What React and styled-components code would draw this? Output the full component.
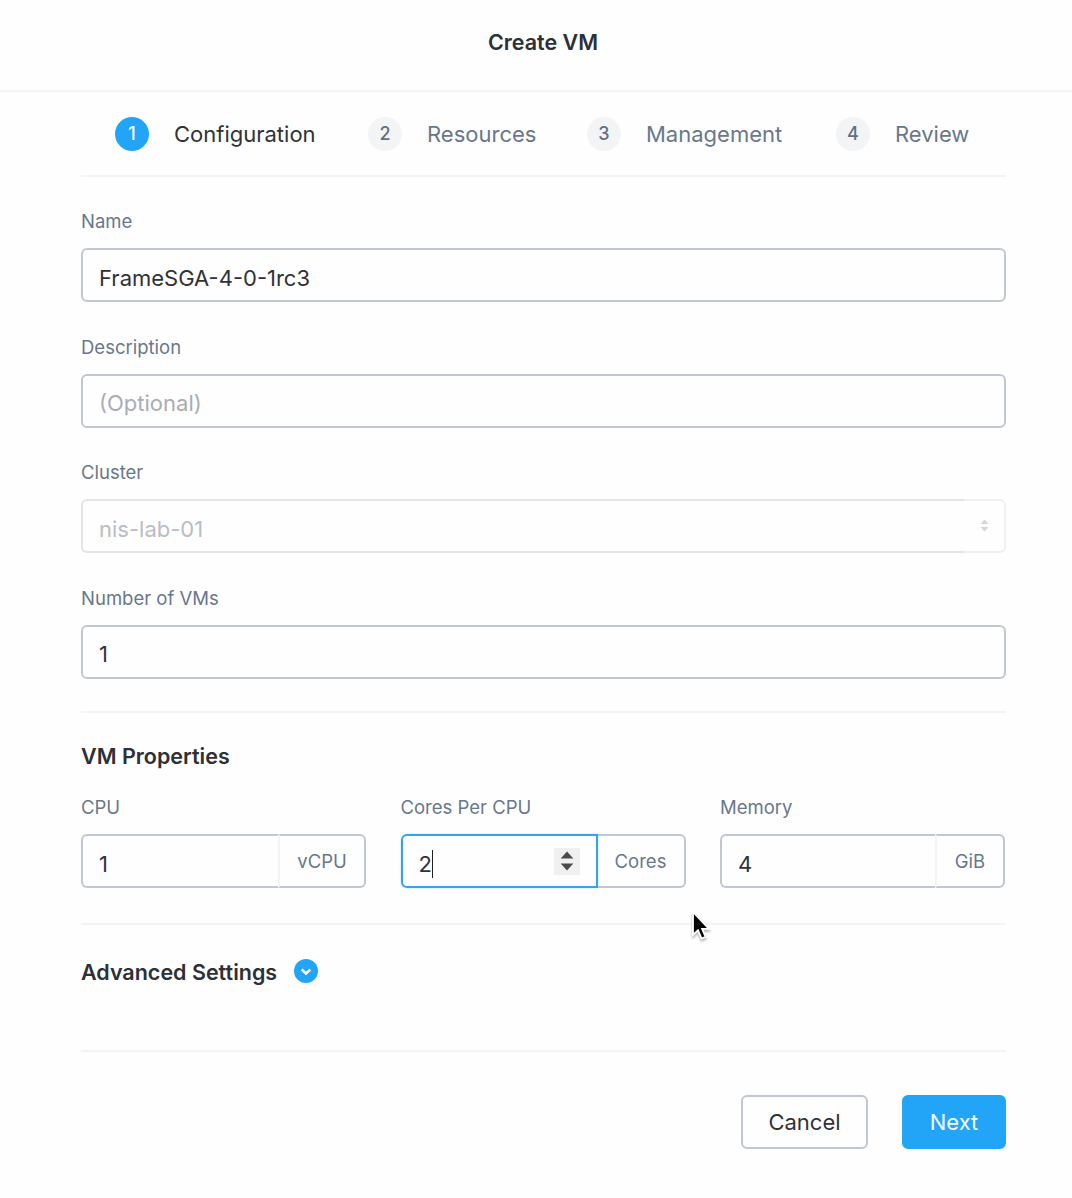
import React from 'react';
import styled, { createGlobalStyle } from 'styled-components';

const GlobalStyle = createGlobalStyle`
  * {
    box-sizing: border-box;
  }
  body {
    margin: 0;
    background: #fefefe;
    font-family: Inter, 'Open Sans', 'Liberation Sans', sans-serif;
    color: #2d3036;
  }
`;

const Modal = styled.div`
  position: relative;
  width: 1072px;
  height: 1198px;
  background: #fefefe;
  overflow: hidden;
  white-space: nowrap;
`;

const Header = styled.header`
  display: flex;
  justify-content: center;
  height: 92px;
  padding: 28px 0 0 14px;
  border-bottom: 2px solid #f4f4f6;
`;

const Heading = styled.h2`
  margin: 0;
  font-size: 21.5px;
  font-weight: 600;
  line-height: 28px;
  letter-spacing: ${(props) => props.$track || 0}px;
`;

const Content = styled.main`
  width: 925px;
  margin-left: 81px;
`;

const Steps = styled.nav`
  display: flex;
  align-items: center;
  height: 85px;
  padding-left: 34px;
  border-bottom: 2px solid #f4f4f6;
`;

const Step = styled.div`
  display: flex;
  align-items: center;
  gap: 25px;
  width: ${(props) => props.$width}px;
`;

const StepNumber = styled.span`
  display: flex;
  align-items: center;
  justify-content: center;
  flex: none;
  width: 34px;
  height: 34px;
  border-radius: 50%;
  background: ${(props) => (props.$active ? '#22a5f7' : '#f2f4f6')};
  color: ${(props) => (props.$active ? '#fff' : '#627084')};
  font-size: 18px;
  font-weight: 500;
`;

const StepLabel = styled.span`
  font-size: 22px;
  color: ${(props) => (props.$active ? '#303238' : '#68778d')};
  letter-spacing: ${(props) => props.$track || 0}px;
`;

const Field = styled.div`
  height: 125.5px;
`;

const Label = styled.div`
  height: 40px;
  font-size: 18.5px;
  line-height: 26px;
  color: #68778d;
  letter-spacing: ${(props) => props.$track || 0}px;
`;

const Form = styled.section`
  height: 536px;
  padding-top: 31px;
  border-bottom: 2px solid #f4f4f6;
`;

const Control = styled.div`
  display: flex;
  align-items: center;
  height: 54px;
  padding: 5px 16px 0;
  border: 2px solid #c1c7d1;
  border-radius: 6px;
  font-size: 22px;
  color: #303238;
  letter-spacing: ${(props) => props.$track || 0}px;
`;

const Placeholder = styled(Control)`
  color: #a9adb4;
`;

const Select = styled.div`
  display: flex;
  height: 54px;
`;

const SelectValue = styled(Control)`
  flex: 1;
  border-color: #e1e4e9;
  border-right: 0;
  border-radius: 6px 0 0 6px;
  color: #b9bdc4;
`;

const SelectToggle = styled.div`
  display: flex;
  justify-content: center;
  width: 42px;
  padding-top: 17px;
  border: 2px solid #eff0f2;
  border-left: 0;
  border-radius: 0 6px 6px 0;
`;

const Properties = styled.section`
  height: 212px;
  padding-top: 29px;
  border-bottom: 2px solid #f4f4f6;
`;

const Columns = styled.div`
  display: grid;
  grid-template-columns: repeat(3, 285px);
  gap: 34.5px;
  margin-top: 24px;
`;

const InputGroup = styled.div`
  display: flex;
  height: 54px;
`;

const NumberInput = styled(Control)`
  flex: 1;
  border-right: 0;
  border-radius: 6px 0 0 6px;
  ${(props) =>
    props.$focused &&
    `
    border: 2px solid #35a3ec;
    box-shadow: 0 0 2px #8edcff;
  `}
`;

const Unit = styled.div`
  display: flex;
  align-items: center;
  justify-content: center;
  width: ${(props) => props.$width}px;
  border: 2px solid #c1c7d1;
  border-left: ${(props) => (props.$focused ? '0' : '2px solid #f2f3f5')};
  border-radius: 0 6px 6px 0;
  font-size: 18.5px;
  color: #68778d;
  letter-spacing: ${(props) => props.$track || 0}px;
`;

const Caret = styled.span`
  width: 1.5px;
  height: 28px;
  background: #222;
`;

const Stepper = styled.span`
  display: flex;
  align-items: center;
  justify-content: center;
  width: 26px;
  height: 27px;
  margin: -5px 0 0 auto;
  background: #f0f0f0;
`;

const Advanced = styled.section`
  display: flex;
  align-items: flex-start;
  gap: 17px;
  height: 127px;
  padding-top: 33px;
  border-bottom: 2px solid #f1f3f5;

  svg {
    margin-top: 1px;
  }
`;

const Footer = styled.footer`
  display: flex;
  justify-content: flex-end;
  gap: 34px;
  padding-top: 43px;
`;

const Button = styled.button`
  width: ${(props) => props.$width}px;
  height: 54px;
  padding: 0;
  border: 2px solid ${(props) => (props.$primary ? '#22a5f7' : '#c1c7d1')};
  border-radius: 6px;
  background: ${(props) => (props.$primary ? '#22a5f7' : '#fefefe')};
  color: ${(props) => (props.$primary ? '#f4fbff' : '#303238')};
  font-family: inherit;
  font-size: 22px;
  letter-spacing: ${(props) => props.$track || 0}px;
`;

const Pointer = styled.svg`
  position: absolute;
  left: 688px;
  top: 908px;
  filter: drop-shadow(0 2px 1px rgba(0, 0, 0, 0.3));
`;

const steps = [
  { label: 'Configuration', width: 253, track: 0, active: true },
  { label: 'Resources', width: 219, track: 0 },
  { label: 'Management', width: 249, track: 0 },
  { label: 'Review', width: 136, track: 0 },
];

function SortArrows({ width, height, color }) {
  return (
    <svg width={width} height={height} viewBox="0 0 14 20" fill={color}>
      <path d="M7 0.5L13.3 7.5H0.7z" />
      <path d="M7 19.5L13.3 12.5H0.7z" />
    </svg>
  );
}

function App() {
  return (
    <Modal>
      <GlobalStyle />
      <Header>
        <Heading>Create VM</Heading>
      </Header>
      <Content>
        <Steps>
          {steps.map((step, i) => (
            <Step key={step.label} $width={step.width}>
              <StepNumber $active={step.active}>{i + 1}</StepNumber>
              <StepLabel $active={step.active} $track={step.track}>
                {step.label}
              </StepLabel>
            </Step>
          ))}
        </Steps>

        <Form>
          <Field>
            <Label>Name</Label>
            <Control>FrameSGA-4-0-1rc3</Control>
          </Field>
          <Field>
            <Label>Description</Label>
            <Placeholder>(Optional)</Placeholder>
          </Field>
          <Field>
            <Label>Cluster</Label>
            <Select>
              <SelectValue>nis-lab-01</SelectValue>
              <SelectToggle>
                <SortArrows width={9} height={15} color="#d5d6d8" />
              </SelectToggle>
            </Select>
          </Field>
          <Field>
            <Label>Number of VMs</Label>
            <Control>1</Control>
          </Field>
        </Form>

        <Properties>
          <Heading>VM Properties</Heading>
          <Columns>
            <div>
              <Label>CPU</Label>
              <InputGroup>
                <NumberInput>1</NumberInput>
                <Unit $width={88}>vCPU</Unit>
              </InputGroup>
            </div>
            <div>
              <Label>Cores Per CPU</Label>
              <InputGroup>
                <NumberInput $focused>
                  2<Caret />
                  <Stepper>
                    <SortArrows width={14} height={20} color="#4b4b4b" />
                  </Stepper>
                </NumberInput>
                <Unit $width={88} $focused>
                  Cores
                </Unit>
              </InputGroup>
            </div>
            <div>
              <Label>Memory</Label>
              <InputGroup>
                <NumberInput>4</NumberInput>
                <Unit $width={70}>GiB</Unit>
              </InputGroup>
            </div>
          </Columns>
        </Properties>

        <Advanced>
          <Heading>Advanced Settings</Heading>
          <svg width="24" height="24" viewBox="0 0 24 24">
            <circle cx="12" cy="12" r="12" fill="#22a5f7" />
            <path
              d="M7.7 10.5L12 14.5L16.3 10.5"
              fill="none"
              stroke="#fff"
              strokeWidth="2.4"
            />
          </svg>
        </Advanced>

        <Footer>
          <Button $width={127}>Cancel</Button>
          <Button $width={104} $primary>
            Next
          </Button>
        </Footer>
      </Content>
      <Pointer width="24" height="34" viewBox="0 0 24 34">
        <path
          d="M5 4V27L10 22.3L13.6 30.5L17.6 28.8L14.1 20.8H21z"
          fill="#050505"
          stroke="#fff"
          strokeWidth="1.8"
        />
      </Pointer>
    </Modal>
  );
}

export default App;
